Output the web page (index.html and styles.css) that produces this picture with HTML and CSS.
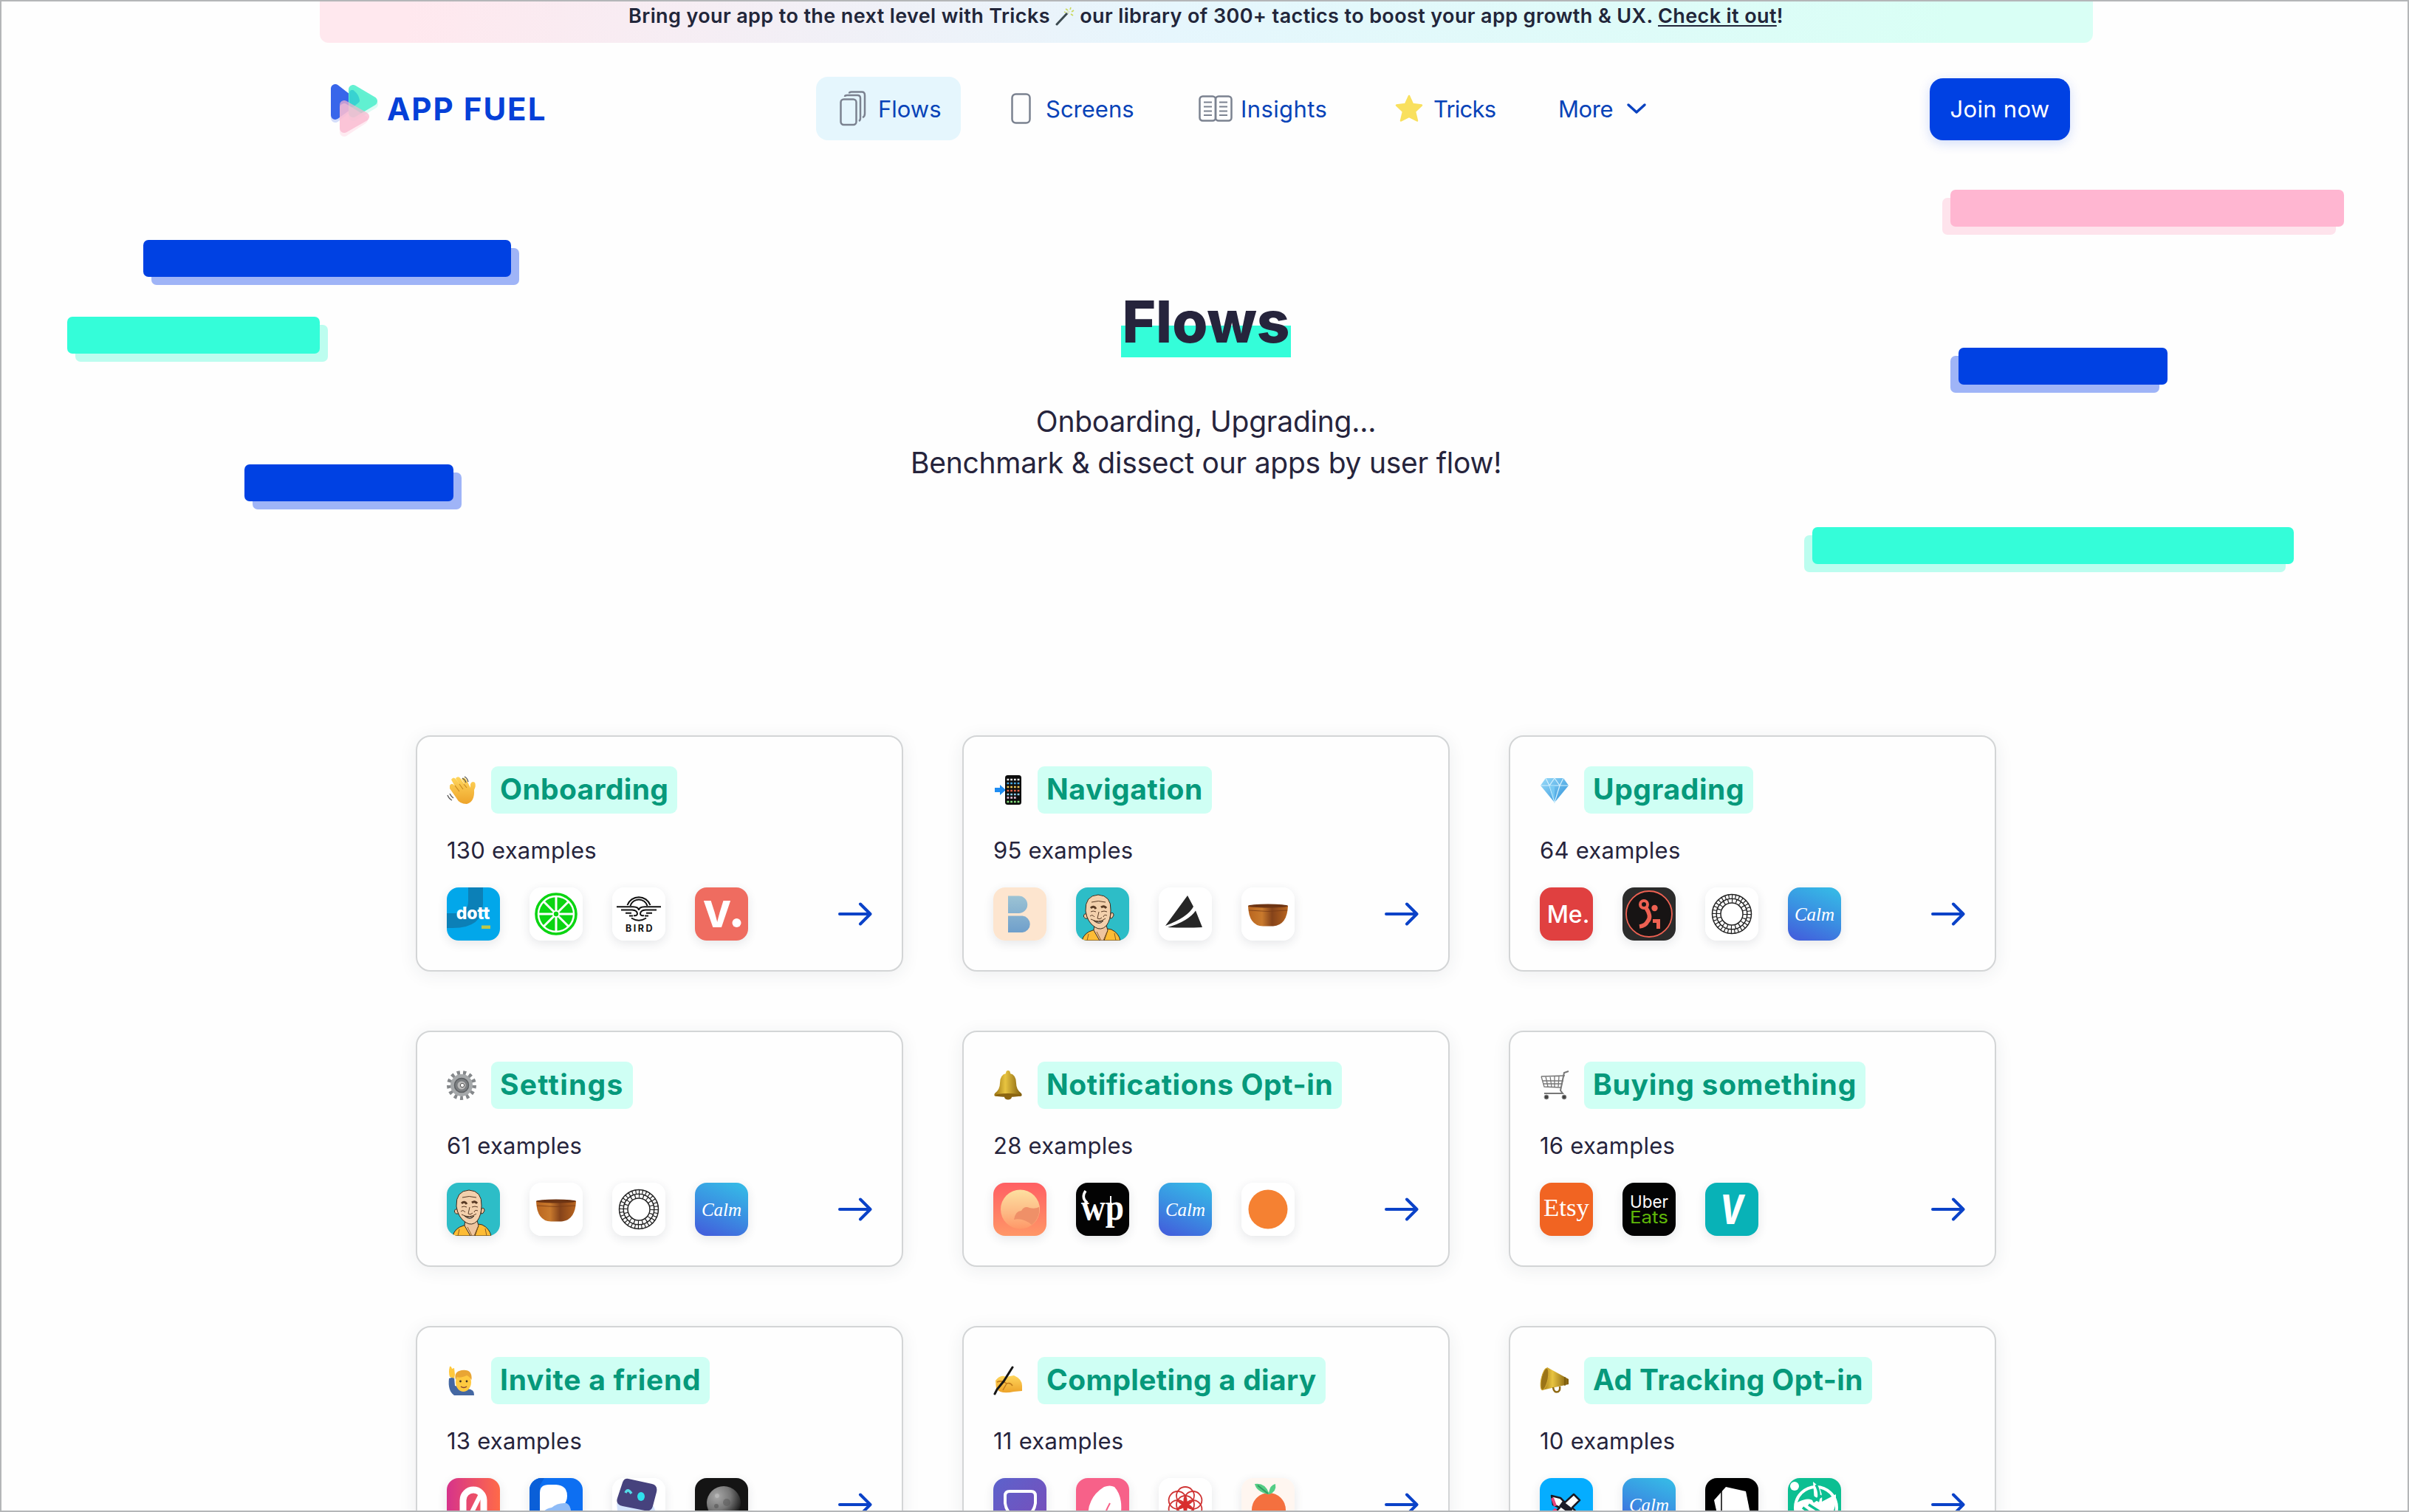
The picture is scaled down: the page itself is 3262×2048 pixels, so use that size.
FILE: index.html
```html
<!DOCTYPE html>
<html lang="en">
<head>
<meta charset="utf-8">
<title>App Fuel – Flows</title>
<link rel="stylesheet" href="styles.css">
</head>
<body>
<svg class="sprite" aria-hidden="true">
  <defs>
    <linearGradient id="g-calm" x1="0.7" y1="0" x2="0.3" y2="1"><stop offset="0" stop-color="#36b7e6"/><stop offset=".5" stop-color="#3a90e2"/><stop offset="1" stop-color="#4262dc"/></linearGradient>
    <linearGradient id="g-b" x1="0" y1="0" x2="0" y2="1"><stop offset="0" stop-color="#9cc3d4"/><stop offset="1" stop-color="#6f9fcb"/></linearGradient>
    <linearGradient id="g-bowl" x1="0" y1="0" x2="1" y2="0"><stop offset="0" stop-color="#b9651f"/><stop offset=".35" stop-color="#c97a2d"/><stop offset=".6" stop-color="#85431a"/><stop offset="1" stop-color="#b8651f"/></linearGradient>
    <linearGradient id="g-sun" x1="0" y1="0" x2="0" y2="1"><stop offset="0" stop-color="#ff5f63"/><stop offset="1" stop-color="#ff9767"/></linearGradient>
    <linearGradient id="g-sun2" x1="0" y1="0" x2="0" y2="1"><stop offset="0" stop-color="#fde0a0"/><stop offset=".6" stop-color="#fdb883"/><stop offset="1" stop-color="#ff9868"/></linearGradient>
    <linearGradient id="g-zero" x1="0" y1="0" x2="1" y2="0"><stop offset="0" stop-color="#d6338b"/><stop offset="1" stop-color="#ff6a48"/></linearGradient>
    <radialGradient id="g-moon" cx=".3" cy=".3" r=".8"><stop offset="0" stop-color="#a8a8a8"/><stop offset=".5" stop-color="#777"/><stop offset="1" stop-color="#111"/></radialGradient>
    <linearGradient id="g-shield" x1="0" y1="0" x2="1" y2="1"><stop offset="0" stop-color="#5c62cc"/><stop offset="1" stop-color="#7c4cb8"/></linearGradient>
    <linearGradient id="g-skin" x1="0" y1="0" x2="0" y2="1"><stop offset="0" stop-color="#ffd65c"/><stop offset="1" stop-color="#eda32a"/></linearGradient>
    <linearGradient id="g-gold" x1="0" y1="0" x2="1" y2="0"><stop offset="0" stop-color="#9c7412"/><stop offset=".4" stop-color="#e8c440"/><stop offset="1" stop-color="#7d5a0c"/></linearGradient>
    <linearGradient id="g-gem" x1="0" y1="0" x2="1" y2="1"><stop offset="0" stop-color="#9adcfa"/><stop offset="1" stop-color="#2b8fd8"/></linearGradient>
  </defs>

  <symbol id="app-dott" viewBox="0 0 72 72">
    <rect width="72" height="72" fill="#02a7ea"/>
    <path d="M29 0H49V22Q49 55 8 55H0V35H10Q29 36 29 18Z" fill="#0c80b7"/>
    <rect x="47" y="51.500" width="12" height="4.500" fill="#b9c84a"/>
  </symbol>
  <symbol id="app-lime" viewBox="0 0 72 72">
    <rect width="72" height="72" fill="#fff"/>
    <circle cx="36" cy="36" r="27" fill="#fff" stroke="#0bd512" stroke-width="3.600"/>
    <circle cx="36" cy="36" r="22.800" fill="#0bd512"/>
    <path d="M36 12V60M12 36H60M19 19L53 53M53 19L19 53" stroke="#fff" stroke-width="3"/>
    <circle cx="36" cy="36" r="5" fill="#fff"/><circle cx="36" cy="36" r="3.200" fill="#0bd512"/>
  </symbol>
  <symbol id="app-bird" viewBox="0 0 72 72">
    <rect width="72" height="72" fill="#fff"/>
    <g fill="none" stroke="#111" stroke-width="2">
      <path d="M20.500 24A16.500 16.500 0 0 1 51.500 24"/><path d="M24.500 25A12 12 0 0 1 47.500 25"/>
      <path d="M6 26.200H28Q36 26.500 36 31Q36 26.500 44 26.200H66"/>
      <path d="M12 30.500H27Q34 31 34 36Q33 39 29 38"/><path d="M60 30.500H45Q38 31 38 36Q39 39 43 38"/>
      <path d="M18 34.800H26M54 34.800H46M23 38.500H28M49 38.500H44"/><path d="M26 41.500Q36 48 46 41.500"/>
    </g>
  </symbol>
  <symbol id="app-b" viewBox="0 0 72 72">
    <rect width="72" height="72" fill="#fde5cf"/>
    <path d="M20 11.500H34.500A11.700 11.700 0 0 1 34.500 35H20ZM20 38.500H39.500A11.300 11.300 0 0 1 39.500 61H20Z" fill="url(#g-b)"/>
  </symbol>
  <symbol id="app-monk" viewBox="0 0 72 72">
    <rect width="72" height="72" fill="#2dbdc7"/>
    <path d="M8 72Q11 61 23 58L31 54L48 57Q58 62 60 72Z" fill="#fdbc35" stroke="#3b2b1c"/>
    <path d="M25 49L24 58L32 72H38L43 58L40 48Z" fill="#eec59f" stroke="#3b2b1c"/>
    <path d="M14 36Q10 35 10.500 40Q12 43 16 42ZM47 35Q51 33 51 38Q49 43 46 42Z" fill="#eec59f" stroke="#3b2b1c"/>
    <path d="M13 32Q12 11 30 10Q48 11 47 31Q47 44 41 52Q34 59 26 54Q15 47 13 32Z" fill="#f3d0ac" stroke="#3b2b1c"/>
    <path d="M20 28Q24 24 27 29M34 27Q38 24 41 28" fill="none" stroke="#593a24" stroke-width="3"/>
    <path d="M20 33Q23 31 27 33M34 33Q38 31 42 33M31 33L29 42Q32 44 35 41M21 20Q30 17 40 20M20 43Q31 49 40 42M19 39Q22 36 25 40M42 38Q38 36 37 40" fill="none" stroke="#593a24"/>
    <path d="M24 45Q31 49 37 45Q32 52 24 45Z" fill="#fff" stroke="#3b2b1c"/>
    <path d="M28 60L34 72M42 60L37 72M17 63L15 72M52 62L54 72" stroke="#8f5f22" fill="none"/>
  </symbol>
  <symbol id="app-peak" viewBox="0 0 72 72">
    <rect width="72" height="72" fill="#fff"/>
    <path d="M39 11L47 26Q40 40 9 52Z" fill="#262626"/>
    <path d="M50 31.500L59 54Q36 55 12 54Q40 46 50 31.500Z" fill="#262626"/>
  </symbol>
  <symbol id="app-bowl" viewBox="0 0 72 72">
    <rect width="72" height="72" fill="#fff"/>
    <path d="M9 25Q10 52 29 52.500H43Q62 51 63 25Z" fill="url(#g-bowl)"/>
    <ellipse cx="36" cy="25" rx="27" ry="2.500" fill="#6d3413"/>
    <path d="M10 31Q36 34 62 31" fill="none" stroke="#7a3c16" stroke-width=".8"/>
  </symbol>
  <symbol id="app-run" viewBox="0 0 72 72">
    <rect width="72" height="72" fill="#2b2b2b"/>
    <circle cx="36" cy="36" r="31" fill="#171414" stroke="#ee6152" stroke-width="1.800"/>
    <circle cx="29" cy="23" r="5" fill="none" stroke="#ee6152" stroke-width="4"/>
    <path d="M32 28Q40 40 34 46Q31 52 23 53" fill="none" stroke="#ee6152" stroke-width="5.500"/>
    <circle cx="43.500" cy="28" r="4.200" fill="#ee6152"/>
    <path d="M41 45.500H48.500V56" fill="none" stroke="#ee6152" stroke-width="5"/>
  </symbol>
  <symbol id="app-ring" viewBox="0 0 72 72">
    <rect width="72" height="72" fill="#fff"/>
    <g fill="none" stroke="#222">
      <circle cx="36" cy="36" r="26.500" stroke-width="1.500"/><circle cx="36" cy="36" r="20.800" stroke-width="1.500"/><circle cx="36" cy="36" r="15" stroke-width="1.500"/>
      <circle cx="36" cy="36" r="23.600" stroke-width="5.600" stroke-dasharray="1.200 3.434" pathLength="148.300"/>
      <circle cx="36" cy="36" r="18" stroke-width="5.600" stroke-dasharray="1.200 4.455" pathLength="113.100"/>
    </g>
  </symbol>
  <symbol id="app-calm" viewBox="0 0 72 72"><rect width="72" height="72" fill="url(#g-calm)"/></symbol>
  <symbol id="app-sunset" viewBox="0 0 72 72">
    <rect width="72" height="72" fill="url(#g-sun)"/>
    <circle cx="36.500" cy="36" r="26.500" fill="url(#g-sun2)"/>
    <path d="M28 50Q30 38 38 38Q42 31 49 34Q56 36 62 33Q64 47 52 57Q40 47 28 50Z" fill="#ef9068"/>
  </symbol>
  <symbol id="app-orange" viewBox="0 0 72 72">
    <rect width="72" height="72" fill="#fff"/><circle cx="36" cy="36" r="26.500" fill="#f58132"/>
  </symbol>
  <symbol id="app-zero" viewBox="0 0 72 72">
    <rect width="72" height="72" fill="url(#g-zero)"/>
    <rect x="22" y="16" width="28" height="46" rx="14" fill="none" stroke="#fff" stroke-width="9"/>
    <path d="M45 24L29 56" stroke="#fff" stroke-width="6"/>
  </symbol>
  <symbol id="app-bubble" viewBox="0 0 72 72">
    <rect width="72" height="72" fill="#0d6ff2"/><path d="M0 0H20L14 10V72H0Z" fill="#0a5fd8"/>
    <path d="M14 50V20Q14 9 26 9H36Q51 10 51 24Q51 34 44 38L20 50Z" fill="#fff"/>
    <path d="M14 72V58Q16 42 30 40Q38 33 50 34Q57 37 56 50V72Z" fill="#8fbcf7"/>
  </symbol>
  <symbol id="app-robot" viewBox="0 0 72 72">
    <rect width="72" height="72" fill="#fff"/>
    <path d="M6 34L56 38L64 60V72H10Z" fill="#d3e3fd"/>
    <path d="M22 1L54 8Q62 10 60 19L55 38Q53 46 44 44L14 38Q4 36 7 27L14 6Q16 0 22 1Z" fill="#46427d"/>
    <path d="M18 20Q21 13 26 21" fill="none" stroke="#54dce8" stroke-width="3.500"/><ellipse cx="39" cy="25" rx="5" ry="6" fill="#2fe0ec"/>
  </symbol>
  <symbol id="app-moon" viewBox="0 0 72 72">
    <rect width="72" height="72" fill="#141414"/><circle cx="39" cy="34" r="23" fill="url(#g-moon)"/>
    <circle cx="30" cy="24" r="3" fill="#c8c8c8" opacity=".5"/><circle cx="43" cy="33" r="5" fill="#555" opacity=".5"/><circle cx="29" cy="38" r="3" fill="#555" opacity=".6"/>
  </symbol>
  <symbol id="app-shield" viewBox="0 0 72 72">
    <rect width="72" height="72" fill="url(#g-shield)"/>
    <path d="M16 24Q16 18 22 18H51Q57 18 57 24V34Q55 50 36.500 56Q18 50 16 34Z" fill="none" stroke="#fff" stroke-width="4"/>
  </symbol>
  <symbol id="app-feather" viewBox="0 0 72 72">
    <rect width="72" height="72" fill="#f76189"/><path d="M17 62Q12 28 38 12Q46 9 52 12Q63 24 61 46L52 48L54 54Q42 66 24 66Z" fill="#fff"/>
    <path d="M35 66Q37 50 46 34" fill="none" stroke="#f76189" stroke-width="2"/>
  </symbol>
  <symbol id="app-flower" viewBox="0 0 72 72">
    <rect width="72" height="72" fill="#fff"/>
    <g fill="none" stroke="#cf3333" stroke-width="1.800"><circle cx="36" cy="36" r="12"/><circle cx="36" cy="24" r="12"/><circle cx="36" cy="48" r="12"/><circle cx="25.600" cy="30" r="12"/><circle cx="46.400" cy="30" r="12"/><circle cx="25.600" cy="42" r="12"/><circle cx="46.400" cy="42" r="12"/></g>
    <path d="M36 25L39 33L46 30L41 36L46 42L39 40L36 48L33 40L26 42L31 36L26 30L33 33Z" fill="#d92d2d"/>
  </symbol>
  <symbol id="app-peach" viewBox="0 0 72 72">
    <rect width="72" height="72" fill="#fff6f0"/>
    <circle cx="37" cy="43" r="23" fill="#f4703f"/><path d="M36 22Q20 18 18 8Q32 6 37 20Q39 9 46 8Q48 18 38 22Z" fill="#54cd85"/><path d="M36 21Q27 14 22 10" stroke="#339b62" stroke-width="2" fill="none"/>
  </symbol>
  <symbol id="app-tape" viewBox="0 0 72 72">
    <rect width="72" height="72" fill="#05adff"/>
    <path d="M16 24L28 27L34 33L46 22L54 30L44 40L53 50L46 58L34 47L24 58L17 50L27 40L18 36Z" fill="#fff" stroke="#191923" stroke-width="2.500" stroke-linejoin="round"/>
    <path d="M31 31L45 42L40 48L26 38Z" fill="#1d1c26"/><path d="M17 27L21 38M18 46L22 42" stroke="#e6427d" stroke-width="4"/>
  </symbol>
  <symbol id="app-slab" viewBox="0 0 72 72">
    <rect width="72" height="72" fill="#000"/><path d="M28 12L55 18L61 48L50 66H20L12 30Z" fill="#fff"/><path d="M22 18V66" stroke="#000" stroke-width="1.500"/>
  </symbol>
  <symbol id="app-leaf" viewBox="0 0 72 72">
    <rect width="72" height="72" fill="#0cbf92"/><circle cx="9" cy="11" r="6" fill="#fff"/>
    <circle cx="38" cy="40" r="28" fill="none" stroke="#fff" stroke-width="4"/>
    <path d="M34 5Q48 14 46 32L65 22Q66 60 36 66Q10 62 11 34Q28 24 36 32Z" fill="#fff"/>
    <path d="M38 9Q44 20 41 30L28 22M20 40L42 56M28 36L50 50M34 32L46 24" stroke="#0cbf92" stroke-width="3.500" fill="none"/>
  </symbol>

  <symbol id="em-wave" viewBox="0 0 40 40">
    <path d="M4 14Q7 9 11 15L6 6Q9 1 13 6L18 14L12 4Q16 0 19 5L25 14L20 5Q24 1 27 7L32 17V12Q34 7 38 10Q40 14 37 20Q38 36 27 39Q17 39 13 31L4 18Z" fill="url(#g-skin)"/>
    <path d="M11 14L17 22M17 12L22 19M23 12L27 17" stroke="#c98920" stroke-width="1.200" fill="none"/>
    <path d="M24 2Q28 4 29 9M21 4Q25 6 26 10M1 27Q3 32 7 34M4 25Q6 29 9 31" stroke="#555" stroke-width="1.300" fill="none"/>
  </symbol>
  <symbol id="em-phone" viewBox="0 0 40 40">
    <path d="M2 17H9V13L17 20L9 27V23H2Z" fill="#1f8df2"/><rect x="16" y="0" width="22" height="40" rx="3.500" fill="#0d0d0d"/>
    <g fill="none" stroke-width="2.600" stroke-dasharray="2.800 1.900"><path d="M18.500 6H36" stroke="#eee"/><path d="M18.500 11H36" stroke="#49a7e0"/><path d="M18.500 16H36" stroke="#f0c75b"/><path d="M18.500 21H36" stroke="#e5684e"/><path d="M18.500 26H36" stroke="#8ecff0"/><path d="M18.500 30.500H32" stroke="#eec7df"/><path d="M18.500 36H36" stroke="#83df7b"/></g>
  </symbol>
  <symbol id="em-gem" viewBox="0 0 40 40">
    <path d="M8 4H32L39 14L20 37L1 14Z" fill="url(#g-gem)"/><path d="M8 4L13 14L20 4L27 14L32 4M1 14H39M13 14L20 37L27 14" fill="none" stroke="#d4f1ff" stroke-width="1.200"/><path d="M13 14L20 37L20 14Z" fill="#7fd0f7" opacity=".7"/>
  </symbol>
  <symbol id="em-gear" viewBox="0 0 40 40">
    <circle cx="20" cy="20" r="17" fill="none" stroke="#85888b" stroke-width="6" stroke-dasharray="4 4.210" pathLength="106.700"/>
    <circle cx="20" cy="20" r="12.500" fill="#85888b" stroke="#a5a8aa" stroke-width="5"/><circle cx="20" cy="20" r="9.500" fill="#7b7e81" stroke="#5d6063" stroke-width="1.500"/><circle cx="20" cy="20" r="5.500" fill="#bbb"/><circle cx="21" cy="20" r="2.700" fill="#fff" stroke="#555"/>
  </symbol>
  <symbol id="em-bell" viewBox="0 0 40 40">
    <ellipse cx="20" cy="36" rx="5" ry="3.500" fill="#8b6410"/><path d="M20 0Q23 0 23 4Q31 6 31 17Q31 26 38 31Q40 35 36 35H4Q0 35 2 31Q9 26 9 17Q9 6 17 4Q17 0 20 0Z" fill="url(#g-gold)"/><ellipse cx="20" cy="33.500" rx="17" ry="2.500" fill="#8b6410"/>
  </symbol>
  <symbol id="em-cart" viewBox="0 0 40 40">
    <path d="M39 1L33 3L28 27L31 31H6" fill="none" stroke="#777" stroke-width="2"/>
    <path d="M2 8L34 7M2 8L6 22L29 23M4 14H32M5 18H31M8 8L11 22M14 8L16 22M20 8V22M26 8L25 22" fill="none" stroke="#777" stroke-width="1.300"/>
    <circle cx="9" cy="36" r="3" fill="#444" stroke="#999"/><circle cx="33" cy="36" r="3" fill="#444" stroke="#999"/>
  </symbol>
  <symbol id="em-hand" viewBox="0 0 40 40">
    <path d="M3 17Q1 34 10 40H37Q38 32 28 31L11 27L10 15Z" fill="#4467a2"/><path d="M4 15Q2 8 4 1Q6 0 7 4L10 3L11 12L10 17Z" fill="#ffc83d"/>
    <ellipse cx="22.500" cy="22" rx="10.500" ry="13" fill="#ffc940"/><path d="M12 19Q9 8 20 6Q35 4 33.500 19Q30 14 27 13Q18 17 14 15Z" fill="#e9a534"/><circle cx="18.500" cy="21" r="1.400" fill="#432"/><circle cx="27" cy="21" r="1.400" fill="#432"/><path d="M19 28Q23 31 27 28" stroke="#843" stroke-width="1.500" fill="none"/>
  </symbol>
  <symbol id="em-write" viewBox="0 0 40 40">
    <path d="M3 20Q10 11 17 15L28 13Q39 18 39 27V34L28 35Q10 39 4 31Z" fill="url(#g-skin)"/><path d="M5 22Q12 19 18 24L13 33M18 24Q23 22 26 27" fill="none" stroke="#c17c1c" stroke-width="1.500"/><path d="M26 2L14 21L5 32L2 38" fill="none" stroke="#161616" stroke-width="3" stroke-linecap="round"/>
  </symbol>
  <symbol id="em-horn" viewBox="0 0 40 40">
    <path d="M10 2L39 18V25L3 33Q1 14 10 2Z" fill="url(#g-gold)"/><path d="M18 29Q19 37 25 35Q28 33 27 28" fill="none" stroke="#8f6a15" stroke-width="2.500"/><ellipse cx="6.500" cy="18" rx="4.500" ry="15" transform="rotate(12 6.500 18)" fill="#9b7417" stroke="#d4ac35"/><path d="M34 15V27" stroke="#6d5008" stroke-width="1.200"/>
  </symbol>
  <symbol id="arrow" viewBox="0 0 46 32"><path d="M2 16H43M30 2.500L43.500 16L30 29.500" fill="none" stroke="#0a42c8" stroke-width="4" stroke-linecap="round" stroke-linejoin="round"/></symbol>
</svg>

<div class="banner">Bring your app to the next level with Tricks <svg class="wand" viewBox="0 0 26 26"><path d="M2 24L16 9" stroke="#3c4a50" stroke-width="3" stroke-linecap="round"/><path d="M16 9L19 6" stroke="#dfe8d0" stroke-width="3"/><path d="M14 3L17 5M21 1L20 4M25 5L22 7M24 12L21 10M12 7L14 8" stroke="#c9d95e" stroke-width="1.600"/></svg> our library of 300+ tactics to boost your app growth &amp; UX. <a href="#">Check it out</a>!</div>

<header class="header">
  <a class="brand" href="#">
    <svg class="brand-mark" viewBox="0 0 66 74">
      <g stroke-linejoin="round" stroke-width="12">
        <path d="M8 12V48L26 34V24Z" fill="#b9c8f8" stroke="#b9c8f8" opacity=".6"/>
        <path d="M8 8V44L26 31V22Z" fill="#3866ea" stroke="#3866ea"/>
        <path d="M32 13V46L60 29Z" fill="#c6fbee" stroke="#c6fbee" opacity=".6"/>
        <path d="M32 9V41L59 25Z" fill="#57f0cf" stroke="#57f0cf" opacity=".92"/>
        <path d="M31 14V29L37 24Q36 18 31 14Z" fill="#2bc9d2" stroke="#2bc9d2" stroke-width="8" opacity=".75"/>
        <path d="M20 34V67L46 50Z" fill="#ffe0ea" stroke="#ffe0ea" opacity=".6"/>
        <path d="M20 30V62L48 46Z" fill="#fab4cd" stroke="#fab4cd" opacity=".7"/>
      </g>
    </svg>
    <span>APP FUEL</span>
  </a>
  <nav class="nav">
    <a class="nav-item nav-item-active" href="#">
      <svg class="i-flows" viewBox="0 0 36 48" fill="none" stroke="#7b8290" stroke-width="2.500"><rect x="1.500" y="11.500" width="21" height="34.500" rx="4"/><path d="M7 8Q7 6 10 6H24Q28 6 28 10V37Q28 40 26 41"/><path d="M13 3.500Q13 1.500 16 1.500H30Q34 1.500 34 6V31Q34 35 31 36"/></svg>Flows</a>
    <a class="nav-item" href="#"><svg class="i-screens" viewBox="0 0 27 42" fill="none" stroke="#7b8290" stroke-width="2.500"><rect x="1.500" y="1.500" width="24" height="39" rx="5"/></svg>Screens</a>
    <a class="nav-item nav-insights" href="#"><svg class="i-insights" viewBox="0 0 46 36" fill="none" stroke="#7b8290" stroke-width="2.500"><rect x="1.500" y="1.500" width="21.500" height="33" rx="4"/><rect x="23" y="1.500" width="21.500" height="33" rx="4"/><path d="M7 9.500H18M7 15.500H18M7 21.500H18M7 27H18M28 9.500H39M28 15.500H39M28 21.500H39M28 27H39" stroke-width="2"/></svg>Insights</a>
    <a class="nav-item nav-tricks" href="#"><svg class="i-tricks" viewBox="0 0 38 38"><path d="M19 2L24 13L36 14.500L27 23L30 35.500L19 30L8 35.500L11 23L2 14.500L14 13Z" fill="#f9e05e" stroke="#f9e05e" stroke-width="2.500" stroke-linejoin="round"/></svg>Tricks</a>
    <a class="nav-item nav-more" href="#">More<svg class="i-more" viewBox="0 0 28 16"><path d="M3 3L14 13L25 3" fill="none" stroke="#0a42c0" stroke-width="3.500" stroke-linecap="round" stroke-linejoin="round"/></svg></a>
  </nav>
  <a class="join" href="#">Join now</a>
</header>

<main>
  <section class="hero">
    <h1>Flows</h1>
    <p>Onboarding, Upgrading...<br>Benchmark &amp; dissect our apps by user flow!</p>
  </section>

  <section class="grid">
    <a class="card" href="#">
      <h2><svg class="emoji"><use href="#em-wave"/></svg><span class="title-tight">Onboarding</span></h2>
      <p>130 examples</p>
      <div class="apps"><svg><use href="#app-dott"/><text x="35.500" y="43" class="t-dott">dott</text></svg><svg><use href="#app-lime"/></svg><svg><use href="#app-bird"/><text x="37.500" y="60" class="t-bird">BIRD</text></svg><svg class="bg-v"><text x="30" y="54" class="t-vdot">V</text><circle cx="56.500" cy="48" r="6" fill="#fff"/></svg><svg class="arrow"><use href="#arrow"/></svg></div>
    </a>
    <a class="card" href="#">
      <h2><svg class="emoji"><use href="#em-phone"/></svg><span>Navigation</span></h2>
      <p>95 examples</p>
      <div class="apps"><svg><use href="#app-b"/></svg><svg><use href="#app-monk"/></svg><svg><use href="#app-peak"/></svg><svg><use href="#app-bowl"/></svg><svg class="arrow"><use href="#arrow"/></svg></div>
    </a>
    <a class="card" href="#">
      <h2><svg class="emoji"><use href="#em-gem"/></svg><span>Upgrading</span></h2>
      <p>64 examples</p>
      <div class="apps"><svg class="bg-me"><text x="38.500" y="47.500" class="t-me">Me.</text></svg><svg><use href="#app-run"/></svg><svg><use href="#app-ring"/></svg><svg><use href="#app-calm"/><text x="36" y="45" class="t-calm">Calm</text></svg><svg class="arrow"><use href="#arrow"/></svg></div>
    </a>
    <a class="card" href="#">
      <h2><svg class="emoji"><use href="#em-gear"/></svg><span class="title-wide">Settings</span></h2>
      <p>61 examples</p>
      <div class="apps"><svg><use href="#app-monk"/></svg><svg><use href="#app-bowl"/></svg><svg><use href="#app-ring"/></svg><svg><use href="#app-calm"/><text x="36" y="45" class="t-calm">Calm</text></svg><svg class="arrow"><use href="#arrow"/></svg></div>
    </a>
    <a class="card" href="#">
      <h2><svg class="emoji"><use href="#em-bell"/></svg><span>Notifications Opt-in</span></h2>
      <p>28 examples</p>
      <div class="apps"><svg><use href="#app-sunset"/></svg><svg class="bg-black"><text x="7" y="50" class="t-wp" textLength="58" lengthAdjust="spacingAndGlyphs">wp</text><path d="M13 11Q7 20 14 26L10 31" fill="none" stroke="#fff" stroke-width="3.500"/><path d="M47 18V61" stroke="#fff" stroke-width="2"/></svg><svg><use href="#app-calm"/><text x="36" y="45" class="t-calm">Calm</text></svg><svg><use href="#app-orange"/></svg><svg class="arrow"><use href="#arrow"/></svg></div>
    </a>
    <a class="card" href="#">
      <h2><svg class="emoji"><use href="#em-cart"/></svg><span class="title-loose">Buying something</span></h2>
      <p>16 examples</p>
      <div class="apps"><svg class="bg-etsy"><text x="5" y="44.500" class="t-etsy" textLength="62" lengthAdjust="spacingAndGlyphs">Etsy</text></svg><svg class="bg-black"><text x="10" y="34" class="t-uber" textLength="52" lengthAdjust="spacingAndGlyphs">Uber</text><text x="10" y="54.500" class="t-uber t-eats" textLength="52" lengthAdjust="spacingAndGlyphs">Eats</text></svg><svg class="bg-ven"><text x="20" y="56" class="t-ven" textLength="32" lengthAdjust="spacingAndGlyphs">V</text></svg><svg class="arrow"><use href="#arrow"/></svg></div>
    </a>
    <a class="card" href="#">
      <h2><svg class="emoji"><use href="#em-hand"/></svg><span class="title-loose">Invite a friend</span></h2>
      <p>13 examples</p>
      <div class="apps"><svg><use href="#app-zero"/></svg><svg><use href="#app-bubble"/></svg><svg><use href="#app-robot"/></svg><svg><use href="#app-moon"/></svg><svg class="arrow"><use href="#arrow"/></svg></div>
    </a>
    <a class="card" href="#">
      <h2><svg class="emoji"><use href="#em-write"/></svg><span class="title-tight">Completing a diary</span></h2>
      <p>11 examples</p>
      <div class="apps"><svg><use href="#app-shield"/></svg><svg><use href="#app-feather"/></svg><svg><use href="#app-flower"/></svg><svg><use href="#app-peach"/></svg><svg class="arrow"><use href="#arrow"/></svg></div>
    </a>
    <a class="card" href="#">
      <h2><svg class="emoji"><use href="#em-horn"/></svg><span class="title-tight">Ad Tracking Opt-in</span></h2>
      <p>10 examples</p>
      <div class="apps"><svg><use href="#app-tape"/></svg><svg><use href="#app-calm"/><text x="36" y="45" class="t-calm">Calm</text></svg><svg><use href="#app-slab"/></svg><svg><use href="#app-leaf"/></svg><svg class="arrow"><use href="#arrow"/></svg></div>
    </a>
  </section>
</main>

<div class="bar bar-1"></div>
<div class="bar bar-2"></div>
<div class="bar bar-3"></div>
<div class="bar bar-4"></div>
<div class="bar bar-5"></div>
<div class="bar bar-6"></div>
<div class="frame"></div>
</body>
</html>
```
FILE: styles.css
```css
* { box-sizing: border-box; }
html { height: 2048px; overflow: hidden; }
body {
  position: relative;
  width: 3262px;
  height: 2048px;
  margin: 0;
  padding-left: 4px;
  overflow: hidden;
  background: #fefefe;
  color: #26243c;
  font-family: Inter, "Liberation Sans", sans-serif;
  font-weight: 440;
}
a { color: inherit; text-decoration: none; }
svg { display: block; flex: none; }
.sprite { position: absolute; width: 0; height: 0; }
.frame { position: absolute; inset: 0; border: 2px solid #b4b6b8; pointer-events: none; }

.banner {
  width: 2401px;
  height: 58px;
  margin: 0 auto;
  border-radius: 0 0 12px 12px;
  background: linear-gradient(97deg, #ffe8ee 5%, #e6f6fd 48%, #d9fff5 92%);
  color: #22263a;
  font-size: 27px;
  font-weight: 600;
  line-height: 43px;
  letter-spacing: .38px;
  text-align: center;
  white-space: nowrap;
}
.banner a { text-decoration: underline; text-decoration-thickness: 2px; text-underline-offset: 3px; }
.wand { display: inline-block; width: 26px; height: 26px; vertical-align: -4px; }

.header {
  display: grid;
  grid-template-columns: 657px 1fr 190px;
  align-items: end;
  width: 2355px;
  margin: 46px 0 0 444px;
  height: 86px;
}
.brand { display: flex; align-items: center; gap: 12px; height: 86px; margin-left: -2px; color: #0540d8; font-size: 42px; font-weight: 700; letter-spacing: 2px; white-space: nowrap; }
.brand-mark { width: 66px; height: 74px; margin-top: 4px; }
.nav { display: grid; grid-template-columns: 232px 254px 266px 221px 160px; justify-items: start; color: #0843b8; font-size: 31px; letter-spacing: 0; white-space: nowrap; }
.nav-item { display: flex; align-items: center; height: 86px; padding: 0 26px 0 32px; }
.nav-item-active { border-radius: 16px; background: #e5f6fd; }
.nav-insights { letter-spacing: .4px; }
.nav-tricks { letter-spacing: -.8px; }
.nav-more { letter-spacing: -.4px; }
.i-flows { width: 36px; height: 48px; margin-right: 16px; }
.i-screens { width: 27px; height: 42px; margin-right: 20px; }
.i-insights { width: 46px; height: 36px; margin-right: 11px; }
.i-tricks { width: 38px; height: 38px; margin-right: 14px; }
.i-more { width: 28px; height: 16px; margin-left: 18px; }
.join { height: 84px; border-radius: 18px; background: #0041e3; color: #fff; font-size: 31px; line-height: 84px; letter-spacing: .3px; text-align: center; white-space: nowrap; box-shadow: 0 4px 16px rgba(0, 65, 227, .18); }

.hero { display: flex; flex-direction: column; align-items: center; height: 806px; padding-top: 197px; text-align: center; }
.hero h1 { margin: 0; padding: 0 1px; background: linear-gradient(transparent 54px, #34fdd9 54px); font-size: 78px; line-height: 97px; font-weight: 800; }
.hero p { margin: 59px 0 0; font-size: 39px; line-height: 56px; letter-spacing: -.25px; }

.grid { display: grid; grid-template-columns: repeat(3, 660px); justify-content: center; gap: 80px; }
.card { display: block; height: 320px; padding: 40px; border: 2px solid #d3d5d6; border-radius: 20px; background: #fefefe; box-shadow: 0 4px 24px rgba(40, 50, 60, .08); white-space: nowrap; }
.card h2 { display: flex; align-items: center; gap: 20px; margin: 0; color: #06997b; font-size: 39px; font-weight: 700; line-height: 62px; letter-spacing: .6px; }
.card h2 span { height: 64px; padding: 0 12px; border-radius: 9px; background: #cffff4; }
.card h2 .title-wide { letter-spacing: 1.3px; }
.card h2 .title-loose { letter-spacing: .75px; }
.card h2 .title-tight { letter-spacing: .35px; }
.card p { margin: 30px 0; font-size: 31px; line-height: 40px; letter-spacing: .25px; }
.emoji { width: 40px; height: 40px; }
.apps { display: flex; align-items: center; gap: 40px; }
.apps svg { width: 72px; height: 72px; border-radius: 16px; box-shadow: 0 4px 14px rgba(40, 50, 60, .11); }
.apps .arrow { width: 46px; height: 32px; margin-left: auto; border-radius: 0; box-shadow: none; }
.apps .bg-v { background: #ef6c60; }
.apps .bg-me { background: #e04040; }
.apps .bg-black { background: #030303; }
.apps .bg-etsy { background: #f16422; }
.apps .bg-ven { background: #08b2b7; }

.bar { position: absolute; height: 50px; border-radius: 7px; }
.bar-1 { left: 194px; top: 325px; width: 498px; background: #0041e3; box-shadow: 11px 11px #9fb4f7; }
.bar-2 { left: 91px; top: 429px; width: 342px; background: #34fdd9; box-shadow: 11px 11px #bcfdef; }
.bar-3 { left: 331px; top: 629px; width: 283px; background: #0041e3; box-shadow: 11px 11px #9fb4f7; }
.bar-4 { left: 2641px; top: 257px; width: 533px; background: #ffb6d1; box-shadow: -11px 11px #fee3ec; }
.bar-5 { left: 2652px; top: 471px; width: 283px; background: #0041e3; box-shadow: -11px 11px #9fb4f7; }
.bar-6 { left: 2454px; top: 714px; width: 652px; background: #34fdd9; box-shadow: -11px 11px #bcfdef; }

/* lettering inside the app icons */
.apps text { fill: #fff; letter-spacing: 0; }
.apps .t-dott { text-anchor: middle; font-size: 23px; font-weight: 800; }
.apps .t-bird { text-anchor: middle; fill: #111; font-size: 12.5px; font-weight: 700; letter-spacing: 2.5px; }
.apps .t-vdot { text-anchor: middle; font-size: 50px; font-weight: 800; }
.apps .t-me { text-anchor: middle; font-size: 32px; font-weight: 500; }
.apps .t-calm { text-anchor: middle; font-family: "Liberation Serif", serif; font-style: italic; font-size: 25px; }
.apps .t-wp { font-family: "Liberation Serif", serif; font-weight: 700; font-size: 50px; }
.apps .t-etsy { font-family: "Liberation Serif", serif; font-size: 33px; }
.apps .t-uber { font-size: 23px; }
.apps .t-eats { fill: #5fb709; }
.apps .t-ven { font-size: 55px; font-weight: 800; font-style: italic; }
```
